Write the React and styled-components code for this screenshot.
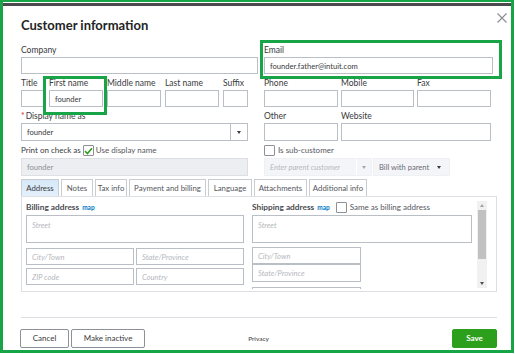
import React from 'react';
import styled, { createGlobalStyle } from 'styled-components';

const GREEN = '#17a548';
const TEXT = '#393a3d';
const BORDER = '#babec5';

const GlobalStyle = createGlobalStyle`
  * { box-sizing: border-box; }
  html, body { margin: 0; padding: 0; background: #fff; }
  body { font-family: Lato, "Liberation Sans", Arial, sans-serif; color: ${TEXT}; }
  input, textarea, button { font-family: inherit; }
`;

const Frame = styled.div`
  position: relative;
  width: 514px;
  height: 353px;
  border: 3px solid ${GREEN};
  border-top-width: 2px;
  background: #fff;
  overflow: hidden;
`;

const TopBar = styled.div`
  height: 3px;
  margin-top: 1px;
  background: #4b4b4d;
`;

const Dialog = styled.div`
  padding: 10px 14px 0 18px;
`;

const Header = styled.div`
  display: flex;
  justify-content: space-between;
  align-items: flex-start;
  height: 18px;
  margin-bottom: 10px;
`;

const Title = styled.h1`
  margin: 0;
  font-size: 13px;
  line-height: 18px;
  font-weight: 700;
  color: #242424;
`;

const CloseButton = styled.span`
  display: block;
  width: 10px;
  height: 10px;
  margin-top: -3px;
  margin-right: -10px;
  svg { display: block; }
`;

const Columns = styled.div`
  display: flex;
  gap: 6px;
`;

const Column = styled.div`
  display: flex;
  flex-direction: column;
  width: ${p => p.$w}px;
`;

const FieldRow = styled.div`
  display: flex;
  gap: ${p => p.$gap ?? 4}px;
  margin-top: ${p => p.$mt ?? 0}px;
`;

const Field = styled.div`
  display: flex;
  flex-direction: column;
  width: ${p => (p.$w ? `${p.$w}px` : '100%')};
`;

const Label = styled.label`
  display: block;
  font-size: 8.5px;
  line-height: 12px;
  height: 12px;
  margin-bottom: 1px;
  color: ${TEXT};
  white-space: nowrap;
`;

const Required = styled.span`
  color: #d52b1e;
  margin-right: 1px;
`;

const Input = styled.input`
  display: block;
  width: 100%;
  height: ${p => p.$h ?? 17}px;
  margin: 0;
  padding: 0 5px;
  border: 1px solid ${p => (p.disabled ? '#dcdfe3' : BORDER)};
  border-radius: 0;
  background: ${p => (p.disabled ? '#eceef1' : '#fff')};
  font-size: 7.6px;
  color: ${p => (p.disabled ? '#8d9096' : TEXT)};
  outline: none;
  &::placeholder { color: #b5b8bd; font-style: italic; }
`;

const TextArea = styled.textarea`
  display: block;
  width: 100%;
  height: 28px;
  margin: 0;
  padding: 5px 5px;
  border: 1px solid ${BORDER};
  border-radius: 0;
  resize: none;
  font-size: 7.5px;
  line-height: 9px;
  outline: none;
  overflow: hidden;
  &::placeholder { color: #b5b8bd; font-style: italic; }
`;

const SelectBox = styled.div`
  display: flex;
  align-items: stretch;
  width: ${p => p.$w}px;
  height: 18px;
  border: 1px solid ${p => (p.$disabled ? '#eef0f2' : BORDER)};
  background: ${p => (p.$disabled ? '#f4f5f8' : '#fff')};
`;

const SelectValue = styled.div`
  flex: ${p => (p.$grow ? 1 : '0 0 auto')};
  padding: 0 5px;
  font-size: 7.6px;
  line-height: 16px;
  white-space: nowrap;
  color: ${p => (p.$placeholder ? '#b5b8bd' : p.$muted ? '#6b6c72' : TEXT)};
  font-style: ${p => (p.$placeholder ? 'italic' : 'normal')};
`;

const ArrowCell = styled.div`
  width: ${p => p.$w ?? 17}px;
  display: flex;
  align-items: center;
  justify-content: center;
  border-left: ${p => (p.$divider ? `1px solid ${p.$divider}` : 'none')};
`;

const Caret = styled.span`
  width: 0;
  height: 0;
  border-left: 2.5px solid transparent;
  border-right: 2.5px solid transparent;
  border-top: 3px solid ${p => p.$color ?? TEXT};
`;

const CheckRow = styled.div`
  display: flex;
  align-items: center;
  gap: ${p => p.$gap ?? 2}px;
  height: 11px;
  margin-top: ${p => p.$mt ?? 4}px;
  font-size: 8px;
  line-height: 11px;
  white-space: nowrap;
`;

const CheckLabel = styled.span`
  color: ${p => (p.$muted ? '#55575c' : TEXT)};
  font-size: ${p => p.$size ?? 8}px;
`;

const Checkbox = styled.span`
  display: flex;
  align-items: center;
  justify-content: center;
  flex: 0 0 auto;
  width: 11px;
  height: 11px;
  border: 1px solid #8d9096;
  border-radius: 1px;
  background: #fff;
`;

const Tabs = styled.div`
  display: flex;
  gap: 2px;
  margin-top: 3px;
  height: 17px;
`;

const Tab = styled.div`
  width: ${p => p.$w}px;
  height: 17px;
  border: 1px solid #c9ccd1;
  border-bottom: none;
  font-size: 7.8px;
  line-height: 16px;
  text-align: center;
  white-space: nowrap;
  color: ${p => (p.$active ? TEXT : '#55575c')};
  background: ${p => (p.$active ? 'linear-gradient(#d6e8f8, #e4f0fb)' : '#fff')};
`;

const Panel = styled.div`
  display: flex;
  height: 96px;
  padding: 4px 9px 0 4px;
  border: 1px solid #dcdfe3;
`;

const AddressCol = styled.div`
  display: flex;
  flex-direction: column;
  width: ${p => p.$w}px;
  flex: 0 0 auto;
`;

const SectionHead = styled.div`
  display: flex;
  align-items: center;
  gap: 3px;
  height: 12px;
  margin-bottom: 2px;
  white-space: nowrap;
`;

const SectionTitle = styled.span`
  font-size: 8.3px;
  font-weight: 700;
  color: #4a4b50;
`;

const MapLink = styled.a`
  font-size: 6.5px;
  font-weight: 700;
  color: #0077c5;
  text-decoration: none;
  margin-right: ${p => p.$mr ?? 0}px;
`;

const AddressGrid = styled.div`
  display: grid;
  grid-template-columns: 108px 108px;
  column-gap: 2px;
  row-gap: 3px;
  margin-top: 5px;
`;

const ShippingViewport = styled.div`
  width: 220px;
  height: 88px;
  margin-left: 8px;
  overflow: hidden;
  flex: 0 0 auto;
`;

const Stack = styled.div`
  display: flex;
  flex-direction: column;
  width: ${p => p.$w}px;
  margin-top: ${p => p.$mt ?? 0}px;
`;

const Scrollbar = styled.div`
  display: flex;
  flex-direction: column;
  width: 10px;
  height: 87px;
  margin-left: 5px;
  background: #f1f1f1;
  flex: 0 0 auto;
`;

const ScrollArrow = styled.div`
  height: 9px;
  display: flex;
  align-items: center;
  justify-content: center;
`;

const ArrowUp = styled.span`
  width: 0;
  height: 0;
  border-left: 2.5px solid transparent;
  border-right: 2.5px solid transparent;
  border-bottom: 3px solid #a3a3a3;
`;

const ScrollThumb = styled.div`
  height: 49px;
  margin: 0 1px;
  background: #c1c1c1;
`;

const ScrollSpacer = styled.div`
  flex: 1;
`;

const Divider = styled.div`
  height: 1px;
  margin-top: 25px;
  background: #dcdfe3;
`;

const FooterRow = styled.div`
  display: grid;
  grid-template-columns: 1fr auto 1fr;
  align-items: center;
  margin-top: 11px;
  margin-left: -1px;
`;

const ButtonGroup = styled.div`
  display: flex;
  gap: 2px;
  justify-self: ${p => (p.$end ? 'end' : 'start')};
`;

const Button = styled.button`
  height: 19px;
  width: ${p => p.$w}px;
  padding: 0;
  border: 1px solid ${p => (p.$primary ? '#2ca01c' : '#8d9096')};
  border-radius: 2px;
  background: ${p => (p.$primary ? '#2ca01c' : '#fff')};
  color: ${p => (p.$primary ? '#fff' : TEXT)};
  font-size: 8px;
  font-weight: ${p => (p.$primary ? 700 : 400)};
  line-height: 17px;
`;

const Privacy = styled.span`
  font-size: 6.5px;
  color: ${TEXT};
`;

const Highlight = styled.div`
  position: absolute;
  left: ${p => p.$x - 3}px;
  top: ${p => p.$y - 2}px;
  width: ${p => p.$w}px;
  height: ${p => p.$h}px;
  border: 3px solid ${GREEN};
  pointer-events: none;
`;

const CheckMark = () => (
  <svg width="9" height="8" viewBox="0 0 9 8">
    <path d="M1 4.2 L3.4 6.5 L8 1.2" fill="none" stroke="#2ca01c" strokeWidth="1.6" />
  </svg>
);

const CloseIcon = () => (
  <svg width="10" height="10" viewBox="0 0 10 10">
    <path d="M0.5 0.5 L9.5 9.5 M9.5 0.5 L0.5 9.5" stroke="#8d9096" strokeWidth="1.2" />
  </svg>
);

const tabs = [
  { label: 'Address', w: 38 },
  { label: 'Notes', w: 32 },
  { label: 'Tax info', w: 32 },
  { label: 'Payment and billing', w: 77 },
  { label: 'Language', w: 44 },
  { label: 'Attachments', w: 53 },
  { label: 'Additional info', w: 58 },
];

export default function App() {
  return (
    <>
      <GlobalStyle />
      <Frame>
        <TopBar />
        <Dialog>
          <Header>
            <Title>Customer information</Title>
            <CloseButton><CloseIcon /></CloseButton>
          </Header>

          <Columns>
            <Column $w={237}>
              <Field>
                <Label>Company</Label>
                <Input readOnly />
              </Field>
              <FieldRow $mt={3}>
                <Field $w={24}><Label>Title</Label><Input readOnly /></Field>
                <Field $w={54}><Label>First name</Label><Input readOnly defaultValue="founder" /></Field>
                <Field $w={54}><Label>Middle name</Label><Input readOnly /></Field>
                <Field $w={54}><Label>Last name</Label><Input readOnly /></Field>
                <Field $w={25}><Label>Suffix</Label><Input readOnly /></Field>
              </FieldRow>
              <FieldRow $mt={3}>
                <Field $w={227}>
                  <Label><Required>*</Required>Display name as</Label>
                  <SelectBox $w={227}>
                    <SelectValue $grow>founder</SelectValue>
                    <ArrowCell $w={17} $divider={BORDER}><Caret /></ArrowCell>
                  </SelectBox>
                </Field>
              </FieldRow>
              <CheckRow>
                <CheckLabel>Print on check as</CheckLabel>
                <Checkbox><CheckMark /></Checkbox>
                <CheckLabel $muted>Use display name</CheckLabel>
              </CheckRow>
              <FieldRow $mt={2}>
                <Field $w={227}><Input disabled $h={18} defaultValue="founder" /></Field>
              </FieldRow>
            </Column>

            <Column $w={229}>
              <Field>
                <Label>Email</Label>
                <Input readOnly defaultValue="founder.father@intuit.com" />
              </Field>
              <FieldRow $mt={3} $gap={3}>
                <Field $w={74}><Label>Phone</Label><Input readOnly /></Field>
                <Field $w={73}><Label>Mobile</Label><Input readOnly /></Field>
                <Field $w={74}><Label>Fax</Label><Input readOnly /></Field>
              </FieldRow>
              <FieldRow $mt={3} $gap={3}>
                <Field $w={74}><Label>Other</Label><Input readOnly $h={18} /></Field>
                <Field $w={150}><Label>Website</Label><Input readOnly $h={18} /></Field>
              </FieldRow>
              <CheckRow $gap={3}>
                <Checkbox />
                <CheckLabel $muted>Is sub-customer</CheckLabel>
              </CheckRow>
              <FieldRow $mt={2} $gap={1}>
                <SelectBox $w={108} $disabled>
                  <SelectValue $grow $placeholder>Enter parent customer</SelectValue>
                  <ArrowCell $w={15} $divider="#ffffff"><Caret $color="#a3a6ab" /></ArrowCell>
                </SelectBox>
                <SelectBox $w={77} $disabled>
                  <SelectValue $muted>Bill with parent</SelectValue>
                  <ArrowCell $w={10}><Caret /></ArrowCell>
                </SelectBox>
              </FieldRow>
            </Column>
          </Columns>

          <Tabs>
            {tabs.map((t, i) => (
              <Tab key={t.label} $w={t.w} $active={i === 0}>{t.label}</Tab>
            ))}
          </Tabs>

          <Panel>
            <AddressCol $w={218}>
              <SectionHead>
                <SectionTitle>Billing address</SectionTitle>
                <MapLink>map</MapLink>
              </SectionHead>
              <TextArea readOnly placeholder="Street" />
              <AddressGrid>
                <Input readOnly placeholder="City/Town" />
                <Input readOnly placeholder="State/Province" />
                <Input readOnly placeholder="ZIP code" />
                <Input readOnly placeholder="Country" />
              </AddressGrid>
            </AddressCol>

            <ShippingViewport>
              <SectionHead>
                <SectionTitle>Shipping address</SectionTitle>
                <MapLink $mr={3}>map</MapLink>
                <Checkbox />
                <CheckLabel $muted>Same as billing address</CheckLabel>
              </SectionHead>
              <TextArea readOnly placeholder="Street" />
              <Stack $w={109} $mt={4}>
                <Input readOnly placeholder="City/Town" />
                <Input readOnly $h={18} placeholder="State/Province" />
              </Stack>
              <Stack $w={109} $mt={5}>
                <Input readOnly placeholder="ZIP code" />
              </Stack>
            </ShippingViewport>

            <Scrollbar>
              <ScrollArrow><ArrowUp /></ScrollArrow>
              <ScrollThumb />
              <ScrollSpacer />
              <ScrollArrow><Caret $color="#505050" /></ScrollArrow>
            </Scrollbar>
          </Panel>

          <Divider />
          <FooterRow>
            <ButtonGroup>
              <Button $w={49}>Cancel</Button>
              <Button $w={74}>Make inactive</Button>
            </ButtonGroup>
            <Privacy>Privacy</Privacy>
            <ButtonGroup $end>
              <Button $primary $w={45}>Save</Button>
            </ButtonGroup>
          </FooterRow>
        </Dialog>

        <Highlight $x={260} $y={40} $w={242} $h={39} />
        <Highlight $x={43} $y={76} $w={64} $h={39} />
      </Frame>
    </>
  );
}
